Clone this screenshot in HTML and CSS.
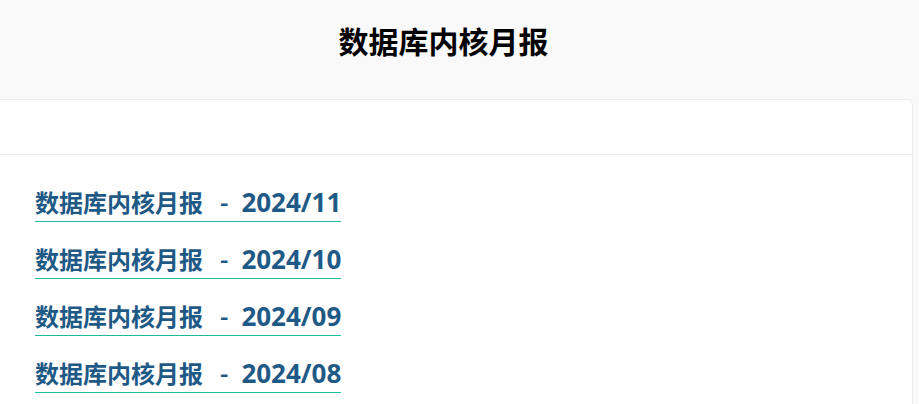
FILE: index.html
```html
<!DOCTYPE html>
<html lang="zh-CN">
<head>
<meta charset="utf-8">
<title>数据库内核月报</title>
<link rel="stylesheet" href="styles.css">
</head>
<body>
<div class="page">
  <header class="top">
    <h1 class="title">数据库内核月报</h1>
  </header>
  <section class="card">
    <div class="card-head"></div>
    <ul class="list">
      <li><a class="item" href="#">数据库内核月报<span class="sep">-</span><span class="date">2024/11</span></a></li>
      <li><a class="item" href="#">数据库内核月报<span class="sep">-</span><span class="date">2024/10</span></a></li>
      <li><a class="item" href="#">数据库内核月报<span class="sep">-</span><span class="date">2024/09</span></a></li>
      <li><a class="item" href="#">数据库内核月报<span class="sep">-</span><span class="date">2024/08</span></a></li>
    </ul>
  </section>
</div>
</body>
</html>
```
FILE: styles.css
```css
html, body {
  margin: 0;
  padding: 0;
  background: #f9f9f9;
  font-family: "Open Sans", "Noto Sans CJK SC", sans-serif;
  overflow: hidden;
}
.page {
  margin: 0 6px 0 -26px;
}
.top {
  height: 99px;
  display: flex;
  align-items: center;
  justify-content: center;
}
.title {
  margin: 0;
  font-family: "Noto Sans CJK SC", sans-serif;
  font-size: 30px;
  font-weight: 700;
  color: #000;
  line-height: 1;
  padding-bottom: 20px;
}
.card {
  background: #fff;
  border: 1px solid #ececec;
  border-radius: 0 6px 0 0;
  min-height: 320px;
}
.card-head {
  height: 54px;
  border-bottom: 1px solid #ececec;
}
.list {
  list-style: none;
  margin: 0;
  padding: 30px 0 0 60px;
  display: flex;
  flex-direction: column;
  gap: 20px;
}
.list li {
  display: flex;
}
.item {
  font-size: 24px;
  font-weight: 700;
  color: #1f5a86;
  text-decoration: none;
  line-height: 36px;
  border-bottom: 1px solid #1abc9c;
}
.sep,
.date {
  font-size: 26px;
  line-height: 1;
}
.sep {
  margin: 0 13px 0 17px;
  font-weight: 600;
}
```
